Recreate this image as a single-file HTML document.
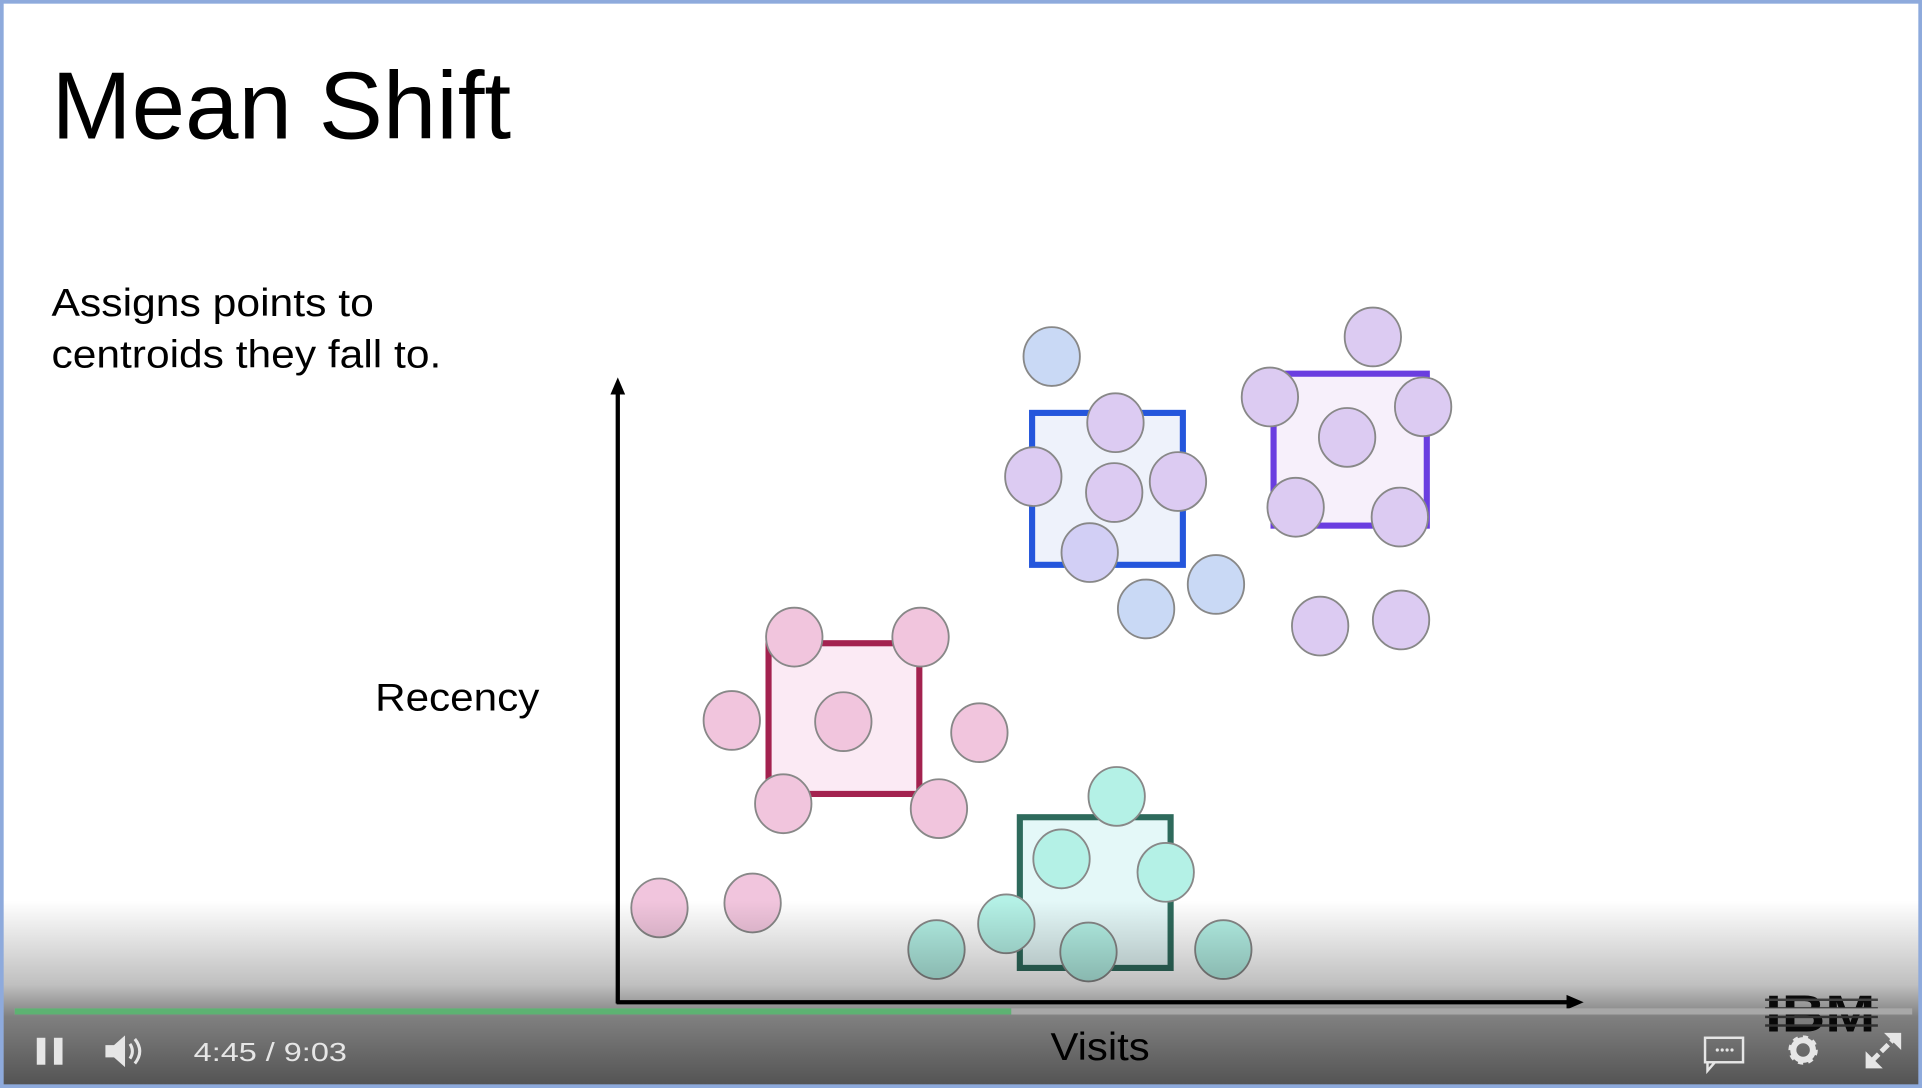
<!DOCTYPE html>
<html><head><meta charset="utf-8"><style>
html,body{margin:0;padding:0;background:#fff;overflow:hidden}
svg{display:block}
text{font-family:"Liberation Sans",Arial,sans-serif}
</style></head><body>
<svg width="1922" height="1088" viewBox="0 0 1568 888" preserveAspectRatio="none" xmlns="http://www.w3.org/2000/svg">
<defs>
<linearGradient id="g" x1="0" y1="0" x2="0" y2="1">
<stop offset="0" stop-color="#000" stop-opacity="0"/>
<stop offset="0.45" stop-color="#000" stop-opacity="0.25"/>
<stop offset="0.62" stop-color="#000" stop-opacity="0.5"/>
<stop offset="1" stop-color="#000" stop-opacity="0.68"/>
</linearGradient>
</defs>
<rect width="1568" height="888" fill="#fff"/>
<text x="42" y="113" font-size="78" textLength="375" lengthAdjust="spacingAndGlyphs">Mean Shift</text>
<text x="42" y="258" font-size="32" textLength="263" lengthAdjust="spacingAndGlyphs">Assigns points to</text>
<text x="42" y="300" font-size="32" textLength="318" lengthAdjust="spacingAndGlyphs">centroids they fall to.</text>
<text x="306" y="580" font-size="32" textLength="134" lengthAdjust="spacingAndGlyphs">Recency</text>
<!-- axes -->
<line x1="504" y1="318" x2="504" y2="819" stroke="#000" stroke-width="3.5"/>
<polygon points="504,308 498,322 510,322" fill="#000"/>
<line x1="503" y1="818" x2="1282" y2="818" stroke="#000" stroke-width="3.5"/>
<polygon points="1292,818 1278,812 1278,824" fill="#000"/>
<!-- boxes -->
<rect x="842" y="337" width="123" height="124" fill="#eef2fb" stroke="#2456dc" stroke-width="5"/>
<rect x="1039" y="305" width="125" height="124" fill="#f7f0fb" stroke="#6a3ee0" stroke-width="5"/>
<rect x="627" y="525" width="123" height="123" fill="#fbeaf4" stroke="#a3224f" stroke-width="5"/>
<rect x="832" y="667" width="123" height="123" fill="#e4f8f8" stroke="#2e6a5c" stroke-width="5"/>
<g stroke="#888" stroke-width="1.5">
<g fill="#c9d9f5">
<ellipse cx="858" cy="291" rx="23" ry="24"/><ellipse cx="935" cy="497" rx="23" ry="24"/><ellipse cx="992" cy="477" rx="23" ry="24"/>
</g>
<g fill="#dccbf2">
<ellipse cx="910" cy="345" rx="23" ry="24"/><ellipse cx="843" cy="389" rx="23" ry="24"/><ellipse cx="909" cy="402" rx="23" ry="24"/><ellipse cx="961" cy="393" rx="23" ry="24"/>
<ellipse cx="1120" cy="275" rx="23" ry="24"/><ellipse cx="1036" cy="324" rx="23" ry="24"/><ellipse cx="1161" cy="332" rx="23" ry="24"/><ellipse cx="1099" cy="357" rx="23" ry="24"/><ellipse cx="1057" cy="414" rx="23" ry="24"/><ellipse cx="1142" cy="422" rx="23" ry="24"/><ellipse cx="1077" cy="511" rx="23" ry="24"/><ellipse cx="1143" cy="506" rx="23" ry="24"/>
</g>
<ellipse cx="889" cy="451" rx="23" ry="24" fill="#d2cff5"/>
<g fill="#f1c5dd">
<ellipse cx="648" cy="520" rx="23" ry="24"/><ellipse cx="751" cy="520" rx="23" ry="24"/><ellipse cx="597" cy="588" rx="23" ry="24"/><ellipse cx="688" cy="589" rx="23" ry="24"/><ellipse cx="799" cy="598" rx="23" ry="24"/><ellipse cx="639" cy="656" rx="23" ry="24"/><ellipse cx="766" cy="660" rx="23" ry="24"/><ellipse cx="538" cy="741" rx="23" ry="24"/><ellipse cx="614" cy="737" rx="23" ry="24"/>
</g>
<g fill="#b4f1e6">
<ellipse cx="911" cy="650" rx="23" ry="24"/><ellipse cx="866" cy="701" rx="23" ry="24"/><ellipse cx="951" cy="712" rx="23" ry="24"/><ellipse cx="821" cy="754" rx="23" ry="24"/><ellipse cx="764" cy="775" rx="23" ry="24"/><ellipse cx="888" cy="777" rx="23" ry="24"/><ellipse cx="998" cy="775" rx="23" ry="24"/>
</g>
</g>
<text x="857" y="865" font-size="32" textLength="81" lengthAdjust="spacingAndGlyphs">Visits</text>
<!-- IBM logo -->
<text x="1485" y="842" font-size="42" font-weight="bold" text-anchor="middle" textLength="90" lengthAdjust="spacingAndGlyphs" fill="#111">IBM</text>
<g fill="#666"><rect x="1440" y="815" width="92" height="2"/><rect x="1440" y="822" width="92" height="2"/><rect x="1440" y="829" width="92" height="2"/><rect x="1440" y="836" width="92" height="2"/></g>
<!-- overlay -->
<rect x="0" y="735" width="1568" height="153" fill="url(#g)"/>
<!-- progress -->
<rect x="12" y="823" width="1548" height="5" fill="#a8a8a8"/>
<rect x="12" y="823" width="813" height="5" fill="#5db272"/>
<!-- controls -->
<rect x="30" y="847" width="7" height="22" fill="#e6e6e6"/><rect x="44" y="847" width="7" height="22" fill="#e6e6e6"/>
<path d="M86 853 h7 l9 -8 v26 l-9 -8 h-7z" fill="#e6e6e6"/>
<path d="M106 852 q4 6 0 12 M110 848 q8 10 0 20" stroke="#e6e6e6" stroke-width="2.5" fill="none"/>
<text x="158" y="866" font-size="21" fill="#e6e6e6" textLength="125" lengthAdjust="spacingAndGlyphs">4:45  /  9:03</text>
<rect x="1391" y="847" width="31" height="20" fill="none" stroke="#e6e6e6" stroke-width="2"/>
<path d="M1393 867 v7 l6 -7" stroke="#e6e6e6" stroke-width="2" fill="none"/>
<g fill="#e6e6e6"><circle cx="1401" cy="857" r="1.3"/><circle cx="1405" cy="857" r="1.3"/><circle cx="1409" cy="857" r="1.3"/><circle cx="1413" cy="857" r="1.3"/></g>
<circle cx="1471" cy="857" r="9" fill="none" stroke="#e6e6e6" stroke-width="6" stroke-dasharray="3.5 3.5"/>
<circle cx="1471" cy="857" r="8" fill="none" stroke="#e6e6e6" stroke-width="5"/>
<path d="M1527 866 L1546 847" stroke="#e6e6e6" stroke-width="4" stroke-dasharray="8 3"/>
<path d="M1522 858 v14 h14z M1551 857 v-14 h-14z" fill="#e6e6e6"/>
<!-- frame -->
<rect x="1.5" y="1.5" width="1565" height="885" fill="none" stroke="#8eaadc" stroke-width="3"/>
</svg>
</body></html>
